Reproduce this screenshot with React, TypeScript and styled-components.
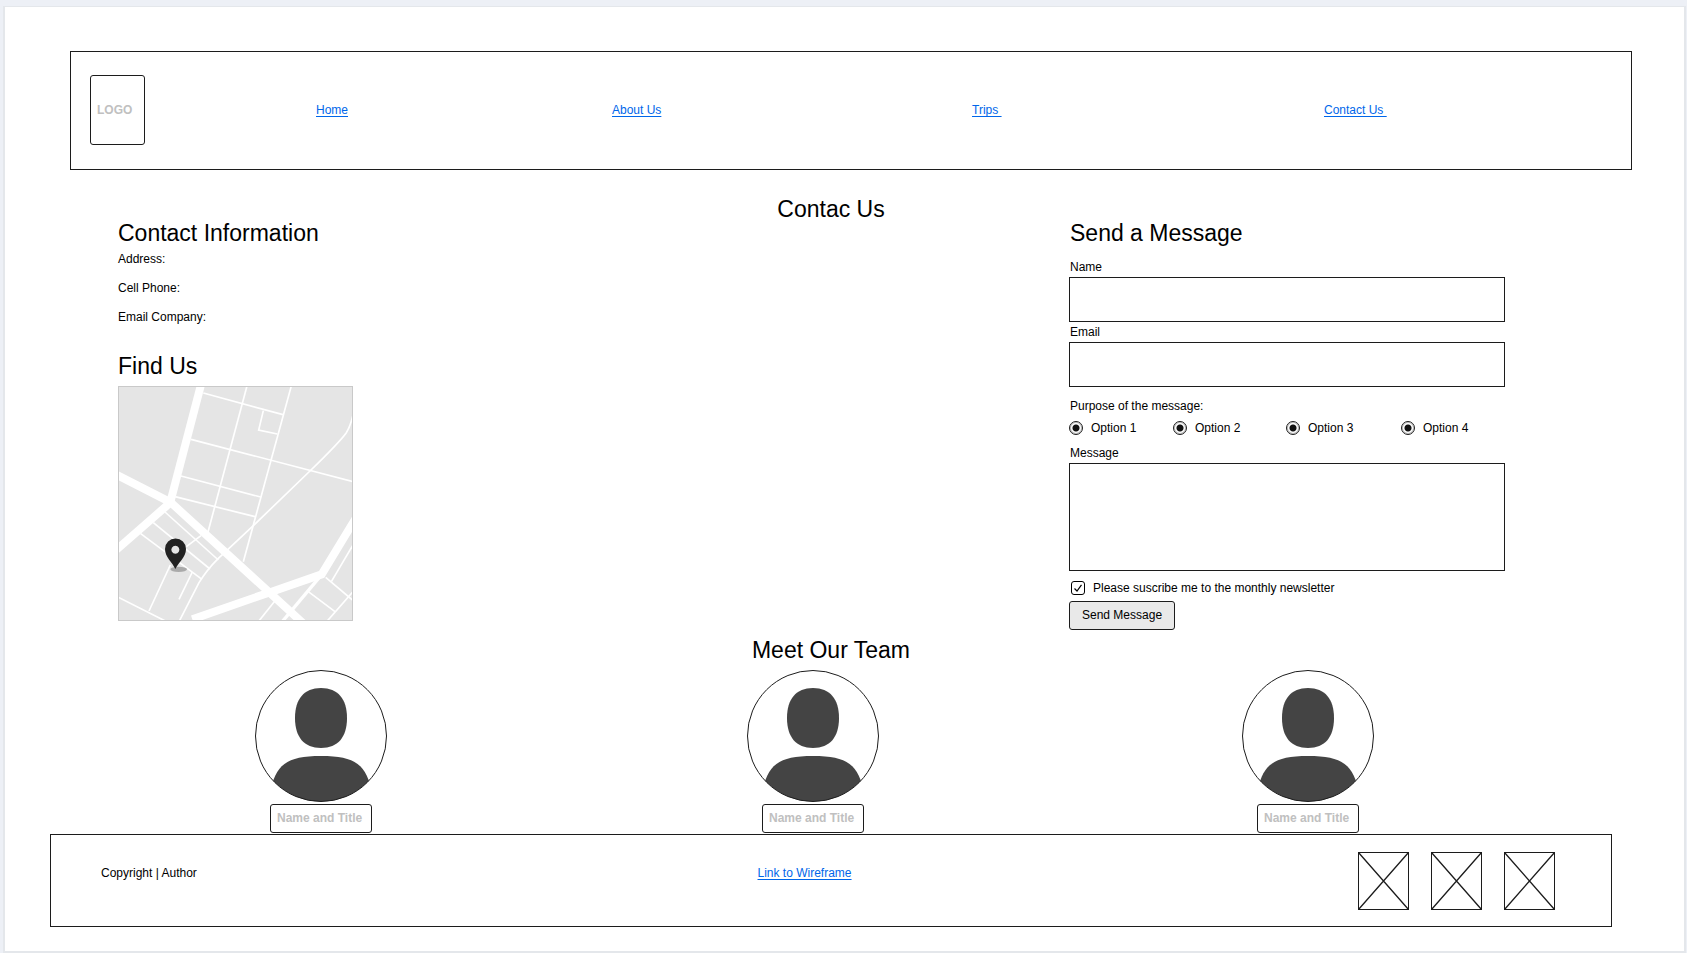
import React from "react";
import styled, { createGlobalStyle } from "styled-components";

const ink = "#1c1c1c";
const link = "#0066ea";

const GlobalStyle = createGlobalStyle`
  *, *::before, *::after { box-sizing: border-box; }
  body {
    margin: 0;
    background: #edf0f6;
    color: #000;
    font: 12px/14px "Liberation Sans", Arial, sans-serif;
  }
  h1, h2, p, figure, fieldset, legend, ul { margin: 0; padding: 0; border: 0; }
  input, textarea, button { font: inherit; color: inherit; margin: 0; }
  svg { display: block; }
`;

const Page = styled.div`
  margin: 6px 1px 0 3px;
  padding: 44px 0 24px;
  background: #fff;
  border: 2px solid #e4e7eb;
  border-top-width: 1px;
`;

const Header = styled.header`
  display: grid;
  grid-template-columns: 226fr 296fr 360fr 352fr 307fr;
  align-items: center;
  margin: 0 52px 0 65px;
  padding: 23px 0 24px 19px;
  border: 1px solid ${ink};
`;

const PlaceholderBox = styled.input<{ $w: number; $h: number }>`
  width: ${(p) => p.$w}px;
  height: ${(p) => p.$h}px;
  padding: 0 6px 1px;
  border: 1px solid ${ink};
  border-radius: 3px;
  background: #fff;
  &::placeholder {
    color: #c0c0c0;
    opacity: 1;
    font-weight: 700;
  }
`;

const TextLink = styled.a`
  justify-self: start;
  color: ${link};
  text-decoration: underline;
  text-underline-offset: 2px;
  white-space: pre;
`;

const Main = styled.main`
  display: flex;
  flex-direction: column;
  margin: 0 72px 0 45px;
  padding-top: 27px;
`;

const headingText = `
  font-size: 23px;
  line-height: 24px;
  font-weight: 400;
`;

const Title = styled.h1`
  ${headingText}
  text-align: center;
`;

const Heading = styled.h2<{ $center?: boolean }>`
  ${headingText}
  text-align: ${(p) => (p.$center ? "center" : "left")};
`;

const Columns = styled.div`
  display: grid;
  grid-template-columns: 951fr 436fr;
  padding: 0 107px 0 68px;
`;

const Details = styled.ul`
  display: flex;
  flex-direction: column;
  gap: 15px;
  margin: 7px 0 30px;
  list-style: none;
`;

const MapFrame = styled.div`
  width: 235px;
  height: 235px;
  margin-top: 8px;
  border: 1px solid #c9c9c9;
  background: #e5e5e5;
`;

const Form = styled.form`
  display: flex;
  flex-direction: column;
  text-indent: 1px;
`;

const Fields = styled.div`
  display: flex;
  flex-direction: column;
  gap: 3px;
  margin-top: 15px;
`;

const Field = styled.label`
  display: flex;
  flex-direction: column;
  gap: 3px;
`;

const TextInput = styled.input`
  width: 100%;
  height: 45px;
  padding: 0 8px;
  border: 1px solid ${ink};
  border-radius: 0;
  background: #fff;
`;

const TextArea = styled.textarea`
  width: 100%;
  height: 108px;
  padding: 8px;
  border: 1px solid ${ink};
  border-radius: 0;
  background: #fff;
  resize: none;
`;

const Purpose = styled.fieldset`
  min-width: 0;
  margin: 12px 0 11px;
`;

const Options = styled.div`
  display: grid;
  grid-template-columns: 104fr 113fr 115fr 104fr;
  margin-top: 8px;
`;

const Choice = styled.label`
  display: flex;
  align-items: center;
  gap: 8px;
  text-indent: 0;
`;

const Radio = styled.input`
  appearance: none;
  flex: none;
  width: 14px;
  height: 14px;
  border: 1px solid ${ink};
  border-radius: 50%;
  box-shadow: inset 0 0 0 1px #8a8a8a88;
  &:checked { background: radial-gradient(circle, #111 0 3px, transparent 4px); }
`;

const Subscribe = styled(Choice)`
  margin: 10px 0 6px;
  padding-left: 2px;
`;

const TickWrap = styled.span`
  position: relative;
  flex: none;
  width: 14px;
  height: 14px;
`;

const Tick = styled.input`
  appearance: none;
  display: block;
  width: 14px;
  height: 14px;
  border: 1px solid #000;
  border-radius: 3px;
  & + svg {
    position: absolute;
    inset: 0;
    pointer-events: none;
    visibility: hidden;
  }
  &:checked + svg { visibility: visible; }
`;

const SendButton = styled.button`
  align-self: flex-start;
  height: 29px;
  padding: 0 12px 2px;
  border: 1px solid ${ink};
  border-radius: 3px;
  background: #e9e9e9;
  text-indent: 0;
`;

const TeamSection = styled.section`
  display: flex;
  flex-direction: column;
  gap: 8px;
  margin-top: 8px;
`;

const TeamGrid = styled.div`
  display: grid;
  grid-template-columns: 492fr 492fr 498fr;
  padding: 0 55px 0 25px;
`;

const Member = styled.figure`
  display: flex;
  flex-direction: column;
  align-items: center;
  gap: 2px;
`;

const Caption = styled.figcaption`
  display: flex;
`;

const Footer = styled.footer`
  display: grid;
  grid-template-columns: 656fr 600fr auto;
  align-items: start;
  margin: 1px 72px 0 45px;
  padding: 17px 56px 16px 50px;
  border: 1px solid ${ink};
`;

const FooterText = styled.div`
  padding-top: 14px;
`;

const Pictures = styled.div`
  display: flex;
  gap: 22px;
`;

const StreetMap = () => (
  <svg width="233" height="233" viewBox="42 51 699 699" fill="none" stroke="#fff" role="img" aria-label="Map">
    <g strokeWidth="24">
      <path d="M288 44 L197 392" />
      <path d="M30 312 L197 397 L600 765" />
      <path d="M197 397 L30 543" />
      <path d="M262 748 L500 665 L650 613 L755 440" />
    </g>
    <g strokeWidth="5">
      <path d="M295 69 L534 134" />
      <path d="M258 208 L745 335" />
      <path d="M228 318 L467 381" />
      <path d="M210 380 L450 440" />
      <path d="M427 44 L309 486" />
      <path d="M560 44 L415 575" />
      <path d="M475 122 L461 180 L517 192" />
      <path d="M744 135 Q736 170 724 188 Q705 215 618 300 L445 467 L340 565 Q305 600 282 638 L222 755" />
      <path d="M180 426 L340 570" />
      <path d="M145 458 L315 597" />
      <path d="M107 491 L291 628" />
      <path d="M288 497 L244 530" />
      <path d="M196 585 L132 723" />
      <path d="M262 606 L222 688" />
      <path d="M36 680 L185 755" />
      <path d="M509 694 L460 755" />
      <path d="M662 622 L745 692" />
      <path d="M745 523 L679 635" />
      <path d="M610 665 L690 725" />
      <path d="M745 664 L665 755" />
    </g>
    <path d="M645 620 L530 757" strokeWidth="10" />
    <ellipse cx="221" cy="598" rx="25" ry="8" fill="#aaa" stroke="none" />
    <path
      d="M211 597 C203 578 180 562 180 537 A31 31 0 0 1 243 537 C243 562 220 578 211 597 Z M211 527 a12 12 0 1 0 0.1 0 Z"
      fill="#222"
      fillRule="evenodd"
      stroke="none"
    />
  </svg>
);

const Avatar = ({ id }: { id: string }) => (
  <svg width="132" height="132" viewBox="0 0 132 132" role="img" aria-label="Team member">
    <clipPath id={id}>
      <circle cx="66" cy="66" r="65.5" />
    </clipPath>
    <g fill="#444" clipPath={`url(#${id})`}>
      <path d="M66 18 C83 18 92 29 92 48 C92 67 83 78 66 78 C49 78 40 67 40 48 C40 29 49 18 66 18 Z" />
      <path d="M16 118 C22 94 33 86 66 86 C99 86 110 94 116 118 L116 132 L16 132 Z" />
    </g>
    <circle cx="66" cy="66" r="65.5" fill="none" stroke={ink} />
  </svg>
);

const CrossedBox = () => (
  <svg width="51" height="58" viewBox="0 0 51 58" fill="none" stroke={ink} role="img" aria-label="Image">
    <rect x="0.5" y="0.5" width="50" height="57" />
    <path d="M0.5 0.5 L50.5 57.5 M50.5 0.5 L0.5 57.5" strokeWidth="1.3" />
  </svg>
);

const navLinks = ["Home", "About Us", "Trips ", "Contact Us "];
const details = ["Address:", "Cell Phone:", "Email Company:"];
const options = ["Option 1", "Option 2", "Option 3", "Option 4"];
const members = ["member-1", "member-2", "member-3"];

export default function App() {
  return (
    <>
      <GlobalStyle />
      <Page>
        <Header>
          <PlaceholderBox $w={55} $h={70} placeholder="LOGO" aria-label="Logo" />
          {navLinks.map((text) => (
            <TextLink key={text} href="#">{text}</TextLink>
          ))}
        </Header>

        <Main>
          <Title>Contac Us</Title>
          <Columns>
            <section>
              <Heading>Contact Information</Heading>
              <Details>
                {details.map((text) => (
                  <li key={text}>{text}</li>
                ))}
              </Details>
              <Heading>Find Us</Heading>
              <MapFrame>
                <StreetMap />
              </MapFrame>
            </section>

            <Form onSubmit={(e) => e.preventDefault()}>
              <Heading>Send a Message</Heading>
              <Fields>
                <Field>
                  Name
                  <TextInput type="text" name="name" />
                </Field>
                <Field>
                  Email
                  <TextInput type="email" name="email" />
                </Field>
              </Fields>
              <Purpose>
                <legend>Purpose of the message:</legend>
                <Options>
                  {options.map((text) => (
                    <Choice key={text}>
                      <Radio type="radio" name={text} defaultChecked />
                      {text}
                    </Choice>
                  ))}
                </Options>
              </Purpose>
              <Field>
                Message
                <TextArea name="message" />
              </Field>
              <Subscribe>
                <TickWrap>
                  <Tick type="checkbox" name="newsletter" defaultChecked />
                  <svg width="14" height="14" viewBox="0 0 14 14" fill="none" stroke="#000" strokeWidth="1.2">
                    <path d="M3.5 7.5 L6 10 L10.5 3.8" />
                  </svg>
                </TickWrap>
                Please suscribe me to the monthly newsletter
              </Subscribe>
              <SendButton type="submit">Send Message</SendButton>
            </Form>
          </Columns>

          <TeamSection>
            <Heading $center>Meet Our Team</Heading>
            <TeamGrid>
              {members.map((id) => (
                <Member key={id}>
                  <Avatar id={id} />
                  <Caption>
                    <PlaceholderBox $w={102} $h={29} placeholder="Name and Title" aria-label="Name and Title" />
                  </Caption>
                </Member>
              ))}
            </TeamGrid>
          </TeamSection>
        </Main>

        <Footer>
          <FooterText>Copyright | Author</FooterText>
          <FooterText>
            <TextLink href="#">Link to Wireframe</TextLink>
          </FooterText>
          <Pictures>
            <CrossedBox />
            <CrossedBox />
            <CrossedBox />
          </Pictures>
        </Footer>
      </Page>
    </>
  );
}
